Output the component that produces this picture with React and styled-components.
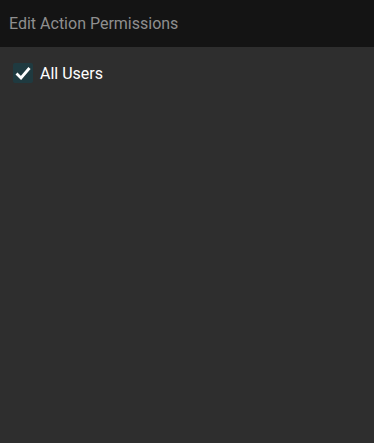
import React, { useState } from 'react';
import styled, { createGlobalStyle } from 'styled-components';

const Global = createGlobalStyle`
  html, body {
    margin: 0;
    padding: 0;
    height: 100%;
    background: #2e2e2e;
  }
  #root {
    height: 100%;
  }
`;

const Panel = styled.div`
  display: flex;
  flex-direction: column;
  height: 100vh;
  background: #2e2e2e;
  font-family: Roboto, "Liberation Sans", sans-serif;
`;

const Header = styled.div`
  display: flex;
  align-items: center;
  height: 47px;
  padding: 0 9px;
  background: #141414;
  color: #8f8f8f;
  font-size: 16px;
`;

const Body = styled.div`
  display: flex;
  flex-direction: column;
  padding: 16px 13px;
`;

const Option = styled.label`
  display: flex;
  align-items: center;
  gap: 7px;
  color: #ffffff;
  font-size: 16px;
  cursor: pointer;
`;

const Box = styled.span`
  display: flex;
  align-items: center;
  justify-content: center;
  width: 20px;
  height: 20px;
  border-radius: 2px;
  background: ${(p) => (p.checked ? '#1f3a40' : '#444')};
`;

const App = () => {
  const [checked, setChecked] = useState(true);

  return (
    <>
      <Global />
      <Panel>
        <Header>Edit Action Permissions</Header>
        <Body>
          <Option onClick={() => setChecked(!checked)}>
            <Box checked={checked}>
              {checked && (
                <svg width="16" height="14" viewBox="0 0 16 14">
                  <path d="M1.5 7.5 L6 12 L14.5 2" fill="none" stroke="#fff" strokeWidth="2.8" />
                </svg>
              )}
            </Box>
            All Users
          </Option>
        </Body>
      </Panel>
    </>
  );
};

export default App;
